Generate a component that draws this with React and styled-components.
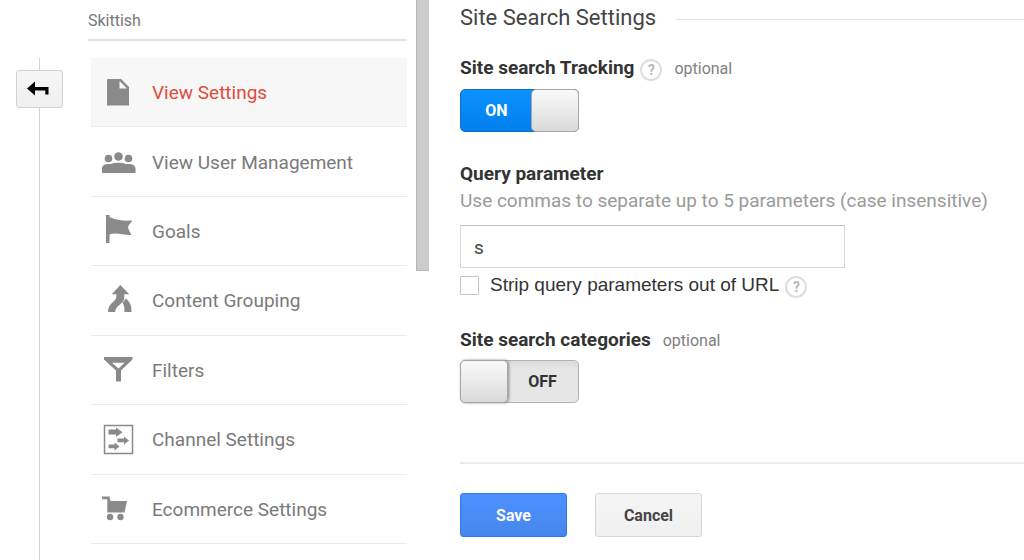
import React, { useState } from "react";
import styled, { createGlobalStyle } from "styled-components";

const Global = createGlobalStyle`
  *, *::before, *::after { box-sizing: border-box; }
  body { margin: 0; background: #fff; color: #333; font-family: Roboto, "Liberation Sans", sans-serif; overflow: hidden; }
  button, input { font-family: inherit; }
`;

const Page = styled.div`
  display: flex;
  min-height: 100vh;
`;

const Rail = styled.div`
  display: flex;
  flex-direction: column;
  align-items: center;
  flex: none;
  width: 79px;
  padding-top: 58px;
`;

const RailLine = styled.span`
  width: 1px;
  background: #d4d4d4;
  ${(p) => (p.$grow ? "flex: 1;" : "height: 12px;")}
`;

const BackButton = styled.button`
  display: flex;
  align-items: center;
  justify-content: center;
  width: 47px;
  height: 38px;
  padding: 0 4px 0 0;
  border: 1px solid #d2d2d2;
  border-radius: 3px;
  background: linear-gradient(#f6f6f6, #f0f0f0);
`;

const Sidebar = styled.div`
  flex: none;
  width: 328px;
  padding-left: 9px;
`;

const ViewName = styled.div`
  height: 41px;
  padding-top: 10px;
  border-bottom: 2px solid #e4e4e4;
  color: #777;
  font-size: 16px;
  line-height: 22px;
`;

const NavList = styled.ul`
  display: grid;
  grid-auto-rows: 1fr;
  min-height: 486px;
  margin: 17px 0 0;
  padding: 0 0 0 3px;
  list-style: none;
`;

const NavItem = styled.li`
  display: flex;
  border-bottom: 1px solid #ebebeb;
`;

const NavLink = styled.a`
  display: flex;
  flex: 1;
  align-items: center;
  gap: 16px;
  padding-left: 9px;
  background: ${(p) => (p.$active ? "#f7f7f7" : "transparent")};
  color: ${(p) => (p.$active ? "#e04c3c" : "#7a7a7a")};
  font-size: 19px;
  line-height: 24px;
  text-decoration: none;
  svg { color: #8a8a8a; }
`;

const NavText = styled.span`
  padding-top: 2px;
`;

const ScrollTrack = styled.div`
  flex: none;
  width: 31px;
  margin-left: 9px;
`;

const ScrollThumb = styled.div`
  width: 13px;
  height: 271px;
  border-left: 1px solid #b8b8b8;
  border-bottom: 1px solid #b8b8b8;
  background: #cbcbcb;
`;

const Main = styled.main`
  flex: 1;
  min-width: 0;
  padding: 4px 0 24px 13px;
`;

const SectionTitle = styled.h2`
  display: flex;
  align-items: center;
  gap: 20px;
  margin: 0 0 24px;
  color: #444;
  font-size: 22px;
  font-weight: 400;
  line-height: 28px;
  &::after { content: ""; flex: 1; height: 1px; margin-top: 3px; background: #e2e2e2; }
`;

const LabelRow = styled.div`
  display: flex;
  align-items: center;
  height: 24px;
  margin-top: ${(p) => p.$before || 0}px;
  margin-bottom: ${(p) => p.$gap || 0}px;
`;

const FieldLabel = styled.label`
  color: #333;
  font-family: ${(p) => (p.$plain ? '"Liberation Sans", sans-serif' : "inherit")};
  font-size: 19px;
  font-weight: ${(p) => (p.$plain ? 400 : 700)};
  line-height: 24px;
`;

const Optional = styled.span`
  margin-left: 12px;
  padding-top: 2px;
  color: #808080;
  font-size: 16px;
  line-height: 22px;
`;

const HelpButton = styled.button`
  width: 22px;
  height: 22px;
  margin: 3px 0 0 6px;
  padding: 0;
  border: 2px solid #dedede;
  border-radius: 50%;
  background: #fff;
  color: #b8b8b8;
  font-size: 14px;
  font-weight: 700;
  line-height: 18px;
`;

const Hint = styled.p`
  margin: 0 0 9px;
  color: #9a9a9a;
  font-size: 19px;
  line-height: 30px;
`;

const SwitchBox = styled.span`
  position: relative;
  display: flex;
  flex-direction: ${(p) => (p.$on ? "row" : "row-reverse")};
  width: 119px;
  height: 43px;
  border: 1px solid ${(p) => (p.$on ? "#0d6fc4" : "#b3b3b3")};
  border-radius: 5px;
  background: ${(p) => (p.$on ? "linear-gradient(#0a92ff, #027fee)" : "linear-gradient(#dcdcdc, #e6e6e6 20%, #e6e6e6)")};
  color: ${(p) => (p.$on ? "#fff" : "#333")};
  font-size: 16px;
  font-weight: 700;
`;

const SwitchInput = styled.input`
  position: absolute;
  inset: 0;
  width: 100%;
  height: 100%;
  margin: 0;
  opacity: 0;
  cursor: pointer;
`;

const SwitchText = styled.span`
  display: flex;
  flex: 1;
  align-items: center;
  justify-content: center;
`;

const Knob = styled.span`
  width: 48px;
  margin: -1px;
  border: 1px solid #a6a6a6;
  border-radius: 5px;
  background: linear-gradient(#fafafa, #dadada);
  box-shadow: ${(p) => (p.$on ? "none" : "1px 0 3px rgba(0, 0, 0, 0.4)")};
`;

const TextInput = styled.input`
  display: block;
  width: 100%;
  max-width: 385px;
  height: 43px;
  padding: 2px 13px 0;
  border: 1px solid #d9d9d9;
  border-top-color: #c0c0c0;
  border-radius: 1px;
  color: #444;
  font-size: 19px;
  outline: none;
`;

const CheckInput = styled.input`
  appearance: none;
  width: 19px;
  height: 19px;
  margin: 0 11px 0 0;
  border: 1px solid #c6c6c6;
  border-radius: 1px;
  background: ${(p) => (p.checked ? "#4d90fe" : "#fff")};
`;

const Field = styled.section`
  margin-bottom: ${(p) => p.$after}px;
`;

const Actions = styled.div`
  display: flex;
  gap: 28px;
  padding-top: 29px;
  border-top: 2px solid #ebebeb;
`;

const ActionButton = styled.button`
  width: 107px;
  height: 44px;
  padding: 0;
  border: 1px solid ${(p) => (p.$primary ? "#3079ed" : "#d6d6d6")};
  border-radius: 3px;
  background: ${(p) => (p.$primary ? "linear-gradient(#4d90fe, #4787ed)" : "linear-gradient(#f5f5f5, #f0f0f0)")};
  color: ${(p) => (p.$primary ? "#fff" : "#444")};
  font-size: 16px;
  font-weight: 700;
`;

const Icon = ({ children }) => (
  <svg width="36" height="36" viewBox="0 0 36 36" fill="currentColor" aria-hidden="true">
    {children}
  </svg>
);

const PageIcon = () => (
  <Icon>
    <path fillRule="evenodd" d="M8 5h13l8 8v18.500h-22V6a1 1 0 0 1 1-1zM19.500 7v7.500h7.500z" />
  </Icon>
);

const PeopleIcon = () => (
  <Icon>
    <circle cx="8.500" cy="14.500" r="3.800" />
    <circle cx="18.500" cy="12.500" r="4.300" />
    <circle cx="28.500" cy="14.500" r="3.800" />
    <path d="M2 29v-4.500c0-4 4-5 9-4.500 4-1.800 11-1.800 15 0 5-.5 9.500.5 9.500 4.500V29z" />
  </Icon>
);

const FlagIcon = () => (
  <Icon>
    <path d="M6 2h3.500v2c7 3.500 14 4 23 3.500-2 2.500-4 4.500-4.500 7 .5 2.500 2 4.500 3.500 7.500-8 .5-15-3-22-.5V30H6z" />
  </Icon>
);

const MergeIcon = () => (
  <Icon>
    <path d="M20.300 3l8.900 9.300h-5V17c-1.500 5-9 7-9 13H8c0-9 8-10 8.300-15v-2.700h-4.500z" />
    <path d="M22.500 20.500l3.500-4c3.500 3.500 5.700 6 5.500 13.500h-7c.2-4-.5-7-2-9.500z" />
  </Icon>
);

const FunnelIcon = () => (
  <Icon>
    <path fillRule="evenodd" d="M4 5h28.500v2.500l-11.500 11V29.500h-5V18.500L4 7.500zM12 10.800l6.500 5.700 6-5.700z" />
  </Icon>
);

const ChannelIcon = () => (
  <Icon>
    <rect x="4.500" y="4.500" width="28" height="28" fill="none" stroke="currentColor" strokeWidth="1.500" />
    <path d="M8.500 8.500h7.500V6.500l6.500 4.700-6.500 4.800v-2.500H8.500z" />
    <path d="M17.500 17.500h6.500V15.500l5 4-5 4v-2.300h-6.500z" />
    <path d="M8.500 23.500h6V21.500l5 4-5 4v-2.300h-6z" />
  </Icon>
);

const CartIcon = () => (
  <Icon>
    <path d="M2 5.500h7.500L10.500 10h16.500L24.500 21.500H7.300V8.300H2z" />
    <circle cx="10" cy="26" r="3.200" />
    <circle cx="20.500" cy="26" r="3.200" />
  </Icon>
);

const items = [
  ["View Settings", PageIcon],
  ["View User Management", PeopleIcon],
  ["Goals", FlagIcon],
  ["Content Grouping", MergeIcon],
  ["Filters", FunnelIcon],
  ["Channel Settings", ChannelIcon],
  ["Ecommerce Settings", CartIcon],
];

function Switch({ id, initial }) {
  const [on, setOn] = useState(initial);
  return (
    <SwitchBox $on={on}>
      <SwitchText>{on ? "ON" : "OFF"}</SwitchText>
      <Knob $on={on} />
      <SwitchInput id={id} type="checkbox" role="switch" checked={on} onChange={(e) => setOn(e.target.checked)} />
    </SwitchBox>
  );
}

export default function App() {
  const [query, setQuery] = useState("s");
  const [strip, setStrip] = useState(false);
  return (
    <Page>
      <Global />
      <Rail>
        <RailLine />
        <BackButton type="button" aria-label="Back">
          <svg width="22" height="16" viewBox="0 0 22 16" aria-hidden="true">
            <path d="M0 7.500L8 .5V6h13.500v7.500h-3.200v-4H8v5z" fill="#000" />
          </svg>
        </BackButton>
        <RailLine $grow />
      </Rail>
      <Sidebar>
        <ViewName>Skittish</ViewName>
        <nav>
          <NavList>
            {items.map(([name, Glyph], i) => (
              <NavItem key={name}>
                <NavLink href="#" $active={i === 0}>
                  <Glyph />
                  <NavText>{name}</NavText>
                </NavLink>
              </NavItem>
            ))}
          </NavList>
        </nav>
      </Sidebar>
      <ScrollTrack>
        <ScrollThumb />
      </ScrollTrack>
      <Main>
        <SectionTitle>Site Search Settings</SectionTitle>
        <Field $after={30}>
          <LabelRow $gap={9}>
            <FieldLabel htmlFor="tracking">Site search Tracking</FieldLabel>
            <HelpButton type="button">?</HelpButton>
            <Optional>optional</Optional>
          </LabelRow>
          <Switch id="tracking" initial={true} />
        </Field>
        <Field $after={31}>
          <LabelRow>
            <FieldLabel htmlFor="query">Query parameter</FieldLabel>
          </LabelRow>
          <Hint>Use commas to separate up to 5 parameters (case insensitive)</Hint>
          <TextInput id="query" type="text" value={query} onChange={(e) => setQuery(e.target.value)} />
          <LabelRow $before={5}>
            <CheckInput id="strip" type="checkbox" checked={strip} onChange={(e) => setStrip(e.target.checked)} />
            <FieldLabel $plain htmlFor="strip">Strip query parameters out of URL</FieldLabel>
            <HelpButton type="button">?</HelpButton>
          </LabelRow>
        </Field>
        <Field $after={59}>
          <LabelRow $gap={8}>
            <FieldLabel htmlFor="categories">Site search categories</FieldLabel>
            <Optional>optional</Optional>
          </LabelRow>
          <Switch id="categories" initial={false} />
        </Field>
        <Actions>
          <ActionButton type="button" $primary>Save</ActionButton>
          <ActionButton type="button">Cancel</ActionButton>
        </Actions>
      </Main>
    </Page>
  );
}
